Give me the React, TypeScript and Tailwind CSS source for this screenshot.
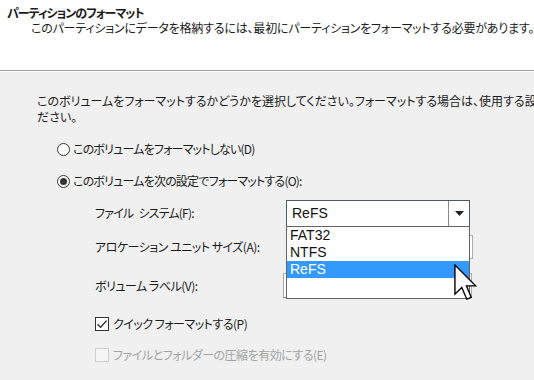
import React from "react";

const font = "font-['Meiryo_UI','Noto_Sans_CJK_JP',sans-serif] [font-feature-settings:'palt']";

function Radio({ checked }: { checked?: boolean }) {
  return (
    <span className="inline-flex items-center justify-center w-[13px] h-[13px] rounded-full border border-[#333] bg-white shrink-0">
      {checked && <span className="w-[7px] h-[7px] rounded-full bg-[#333]" />}
    </span>
  );
}

function Check({ checked, disabled }: { checked?: boolean; disabled?: boolean }) {
  return (
    <span
      className={
        "inline-flex items-center justify-center w-[14px] h-[14px] border shrink-0 " +
        (disabled ? "border-[#cfcfcf] bg-[#f5f5f5]" : "border-[#333] bg-white")
      }
    >
      {checked && (
        <svg width="12" height="12" viewBox="0 0 12 12">
          <path d="M1.5 6.2 L4.6 9.2 L10.6 2.6" fill="none" stroke="#333" strokeWidth="1.4" />
        </svg>
      )}
    </span>
  );
}

function Cursor() {
  return (
    <svg width="23" height="37" viewBox="0 0 12.4 19.8" className="absolute left-[454px] top-[264px]">
      <path
        d="M0.5 0.5 L0.5 16.2 L4.2 12.6 L6.9 18.9 L9.3 17.9 L6.7 11.7 L11.7 11.7 Z"
        fill="#ffffff"
        stroke="#000000"
        strokeWidth="0.75"
        strokeLinejoin="miter"
      />
    </svg>
  );
}

export default function App() {
  return (
    <div className={"relative w-[534px] h-[380px] overflow-hidden bg-[#f0f0f0] text-[12px] text-[#1a1a1a] " + font}>
      {/* header */}
      <div className="h-[71px] bg-white border-b border-[#a0a0a0] pl-[7px] pt-[5px]">
        <div className="font-bold leading-[15px] tracking-[-1px]">パーティションのフォーマット</div>
        <div className="pl-[24px] leading-[16px] whitespace-nowrap tracking-[-0.2px]">
          このパーティションにデータを格納するには、最初にパーティションをフォーマットする必要があります。
        </div>
      </div>
      <div className="h-px bg-white" />

      {/* body */}
      <div className="pl-[37px] pt-[21px]">
        <div className="leading-[16px] whitespace-nowrap">
          <div>このボリュームをフォーマットするかどうかを選択してください。フォーマットする場合は、使用する設定を選択してく</div>
          <div>ださい。</div>
        </div>

        <div className="pl-[20px] mt-[16px] flex flex-col gap-[16px] tracking-[-0.8px]">
          <label className="flex items-center gap-[3px] h-[16px] whitespace-nowrap">
            <Radio />
            <span>このボリュームをフォーマットしない(D)</span>
          </label>
          <label className="flex items-center gap-[3px] h-[16px] whitespace-nowrap">
            <Radio checked />
            <span>このボリュームを次の設定でフォーマットする(O):</span>
          </label>
        </div>

        <div className="pl-[58px] mt-[10px] flex flex-col">
          <div className="flex items-center h-[28px]">
            <span className="w-[191px] whitespace-nowrap tracking-[-0.8px]">
              ファイル<span className="inline-block w-[5px]" />システム(F):
            </span>
            <div className="w-[184px] h-[27px] bg-white border border-[#4a5a6a] flex items-stretch">
              <span className="flex-1 pl-[5px] flex items-center font-['Segoe_UI','Liberation_Sans',sans-serif] text-[14px] text-[#111] [font-feature-settings:normal]">
                ReFS
              </span>
              <span className="w-[21px] border-l border-[#8a8a8a] flex items-center justify-center">
                <svg width="9" height="5" viewBox="0 0 9 5">
                  <path d="M0 0 L9 0 L4.5 5 Z" fill="#222" />
                </svg>
              </span>
            </div>
          </div>

          <div className="flex items-center h-[24px] mt-[8px]">
            <span className="w-[191px] whitespace-nowrap tracking-[-0.5px]">アロケーション ユニット サイズ(A):</span>
            <div className="w-[187px] h-[24px] bg-white border border-[#adadad]" />
          </div>

          <div className="flex items-center h-[25px] mt-[14px]">
            <span className="w-[188px] whitespace-nowrap tracking-[-0.5px]">ボリューム ラベル(V):</span>
            <div className="w-[189px] h-[25px] bg-white border border-[#adadad] border-b-[#4a90d9]" />
          </div>

          <div className="flex flex-col gap-[16px] mt-[18px] tracking-[-0.5px]">
            <label className="flex items-center gap-[4px] h-[15px] whitespace-nowrap">
              <Check checked />
              <span>クイック フォーマットする(P)</span>
            </label>
            <label className="flex items-center gap-[4px] h-[15px] whitespace-nowrap text-[#a3a3a3]">
              <Check disabled />
              <span>ファイルとフォルダーの圧縮を有効にする(E)</span>
            </label>
          </div>
        </div>
      </div>

      {/* dropdown list popup */}
      <div className="absolute left-[286px] top-[226px] w-[184px] h-[73px] bg-white border border-[#646464] font-['Segoe_UI','Liberation_Sans',sans-serif] text-[14px] leading-[16.5px] text-[#111] [font-feature-settings:normal]">
        <div className="pl-[3px] h-[17px]">FAT32</div>
        <div className="pl-[3px] h-[17px]">NTFS</div>
        <div className="pl-[3px] h-[17px] bg-[#3399ff] text-white">ReFS</div>
      </div>

      <Cursor />
    </div>
  );
}
